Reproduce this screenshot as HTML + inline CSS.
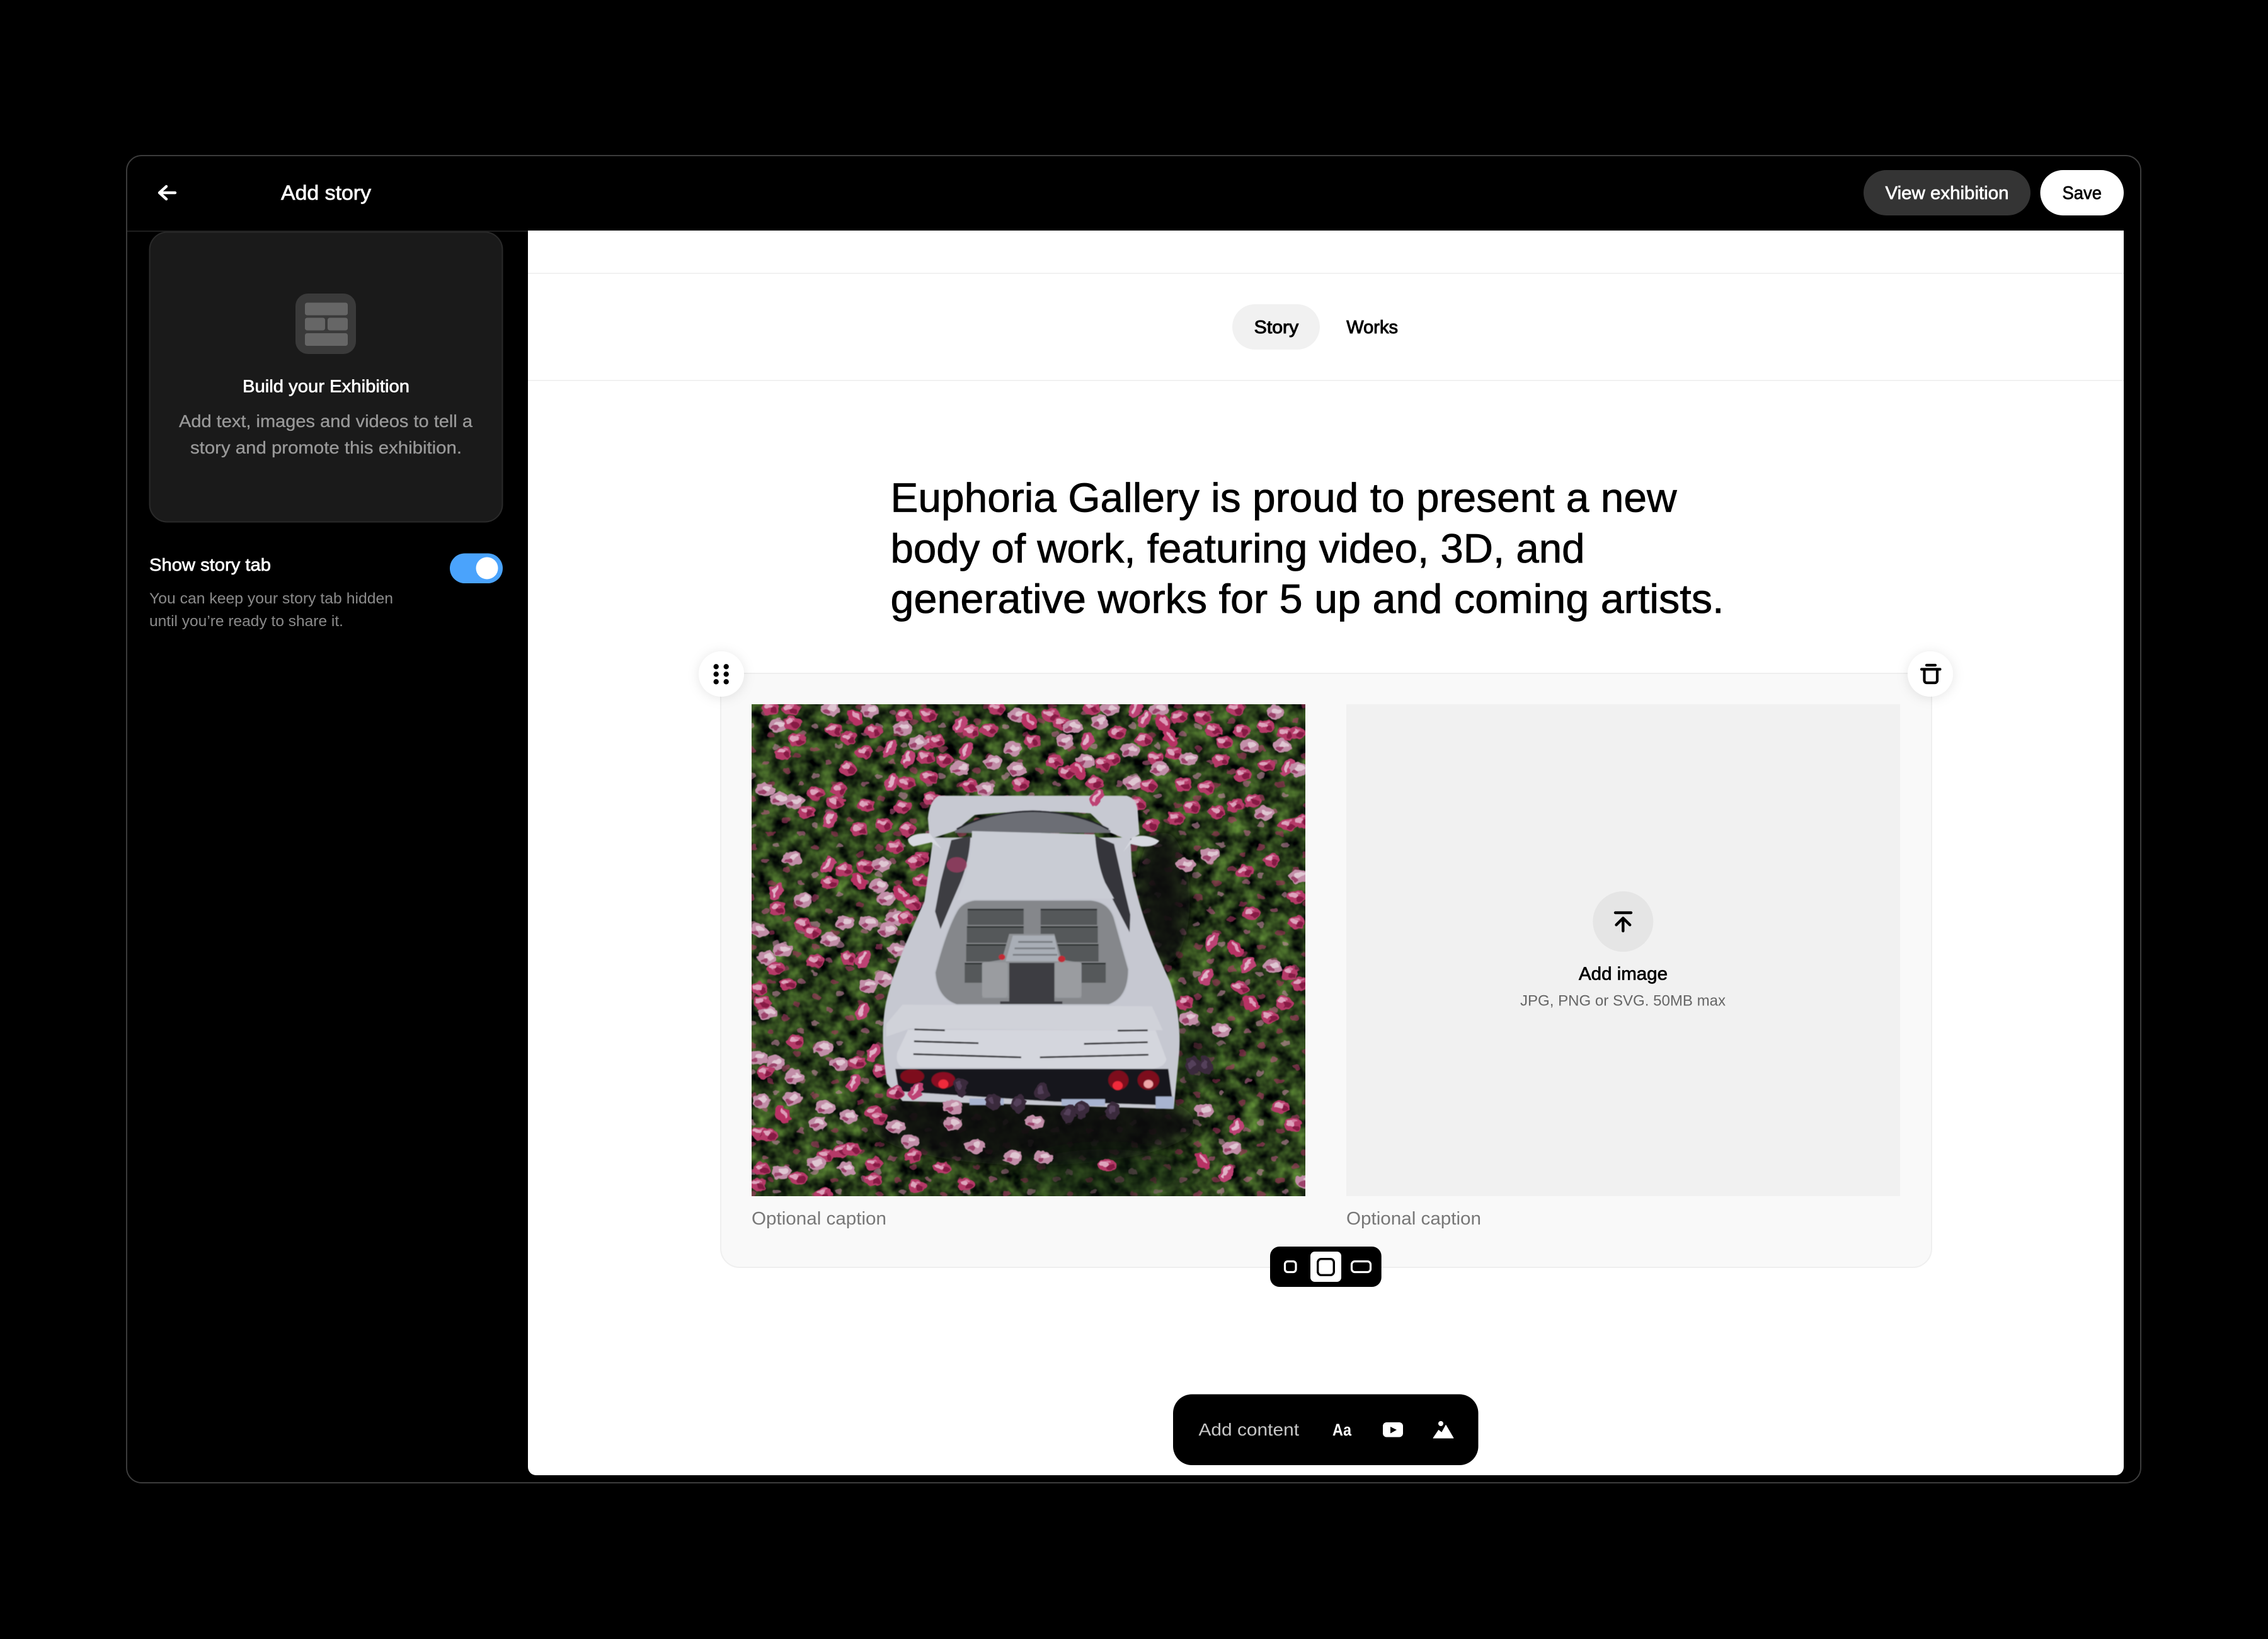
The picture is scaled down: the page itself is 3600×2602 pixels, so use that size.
<!DOCTYPE html>
<html lang="en"><head><meta charset="utf-8"><title>Add story</title>
<style>
html,body{margin:0;padding:0;background:#000;width:3600px;height:2602px;overflow:hidden}
svg{display:block}
text{font-family:"Liberation Sans",Arial,sans-serif}
.m{stroke-width:.7px;paint-order:stroke}
</style></head><body>
<svg xmlns="http://www.w3.org/2000/svg" width="3600" height="2602" viewBox="0 0 3600 2602">
<defs>
<clipPath id="ic"><rect x="1193" y="1118" width="879" height="781"/></clipPath>
<filter id="leaf" x="0" y="0" width="100%" height="100%" color-interpolation-filters="sRGB">
<feTurbulence type="fractalNoise" baseFrequency=".04" numOctaves="3" seed="7"/>
<feColorMatrix values=".6 0 0 0 -.14  .85 0 0 0 -.18  .32 0 0 0 -.06  0 0 0 0 1"/>
</filter>
<filter id="rough" filterUnits="userSpaceOnUse" x="0" y="0" width="1600" height="1600" color-interpolation-filters="sRGB">
<feTurbulence type="fractalNoise" baseFrequency=".05" numOctaves="2" seed="11" result="n"/>
<feDisplacementMap in="SourceGraphic" in2="n" scale="18" xChannelSelector="R" yChannelSelector="G"/>
<feGaussianBlur stdDeviation="1"/>
</filter>
<filter id="soft" filterUnits="userSpaceOnUse" x="0" y="0" width="1600" height="1600"><feGaussianBlur stdDeviation="1.4"/></filter>
<filter id="bl" x="-30%" y="-30%" width="160%" height="160%"><feGaussianBlur stdDeviation="26"/></filter>
<filter id="sh" x="-50%" y="-50%" width="200%" height="200%"><feDropShadow dx="0" dy="2" stdDeviation="9" flood-color="#000" flood-opacity=".1"/></filter>
<g id="a"><g transform="scale(1.1)"><ellipse rx="22" ry="19" fill="#b53a68"/><ellipse cx="-6" cy="-5" rx="10" ry="7" fill="#dda3bc"/><ellipse cx="8" cy="5" rx="9" ry="8" fill="#861a44"/><ellipse cx="3" cy="-11" rx="7" ry="3" fill="#d27a9e"/></g></g>
<g id="b"><g transform="scale(1.1)"><ellipse rx="24" ry="20" fill="#c28ea8"/><ellipse cx="5" cy="-4" rx="12" ry="8" fill="#dfc6d2"/><ellipse cx="-9" cy="7" rx="9" ry="6" fill="#9c426a"/></g></g>
<g id="c"><g transform="scale(1.15)"><ellipse rx="15" ry="25" transform="rotate(25)" fill="#bd4274"/><ellipse rx="5" ry="17" transform="rotate(25) translate(-3,-2)" fill="#e0b2c7"/></g></g>
<g id="e"><g transform="scale(1.15)"><ellipse rx="16" ry="25" transform="rotate(-32)" fill="#b83264"/><ellipse rx="5" ry="16" transform="rotate(-32) translate(4,-3)" fill="#dd9ab7"/></g></g>
<g id="d"><ellipse rx="20" ry="28" fill="#3a2a3c"/><ellipse cx="-3" cy="-5" rx="8" ry="13" fill="#54405a"/></g>
<pattern id="sm" width="176" height="154" patternUnits="userSpaceOnUse">
<ellipse cx="24" cy="20" rx="11" ry="9" fill="#a83a66"/><ellipse cx="90" cy="12" rx="10" ry="8" fill="#c084a0"/><ellipse cx="148" cy="42" rx="11" ry="9" fill="#9c2e5a"/><ellipse cx="60" cy="62" rx="10" ry="8" fill="#b45680"/><ellipse cx="118" cy="88" rx="11" ry="9" fill="#a83a66"/><ellipse cx="22" cy="104" rx="10" ry="9" fill="#c084a0"/><ellipse cx="76" cy="130" rx="11" ry="8" fill="#9c2e5a"/><ellipse cx="160" cy="128" rx="10" ry="8" fill="#b8648c"/>
</pattern>
</defs>

<!-- frame -->
<rect x="201" y="247" width="3197" height="2107" rx="24" fill="#000" stroke="#3c3c3c" stroke-width="2"/>
<rect x="202" y="366" width="636" height="2" fill="#1e1e1e"/>

<!-- header -->
<g fill="none" stroke="#fff" stroke-width="4.4" stroke-linecap="round" stroke-linejoin="round"><path d="M278 306H253M264 296l-11 10 11 10"/></g>
<text x="446" y="317" font-size="32" fill="#fff" stroke="#fff" class="m" textLength="143" lengthAdjust="spacingAndGlyphs">Add story</text>
<rect x="2958" y="270" width="265" height="72" rx="36" fill="#343434"/>
<text x="2992.500" y="316" font-size="29" fill="#fff" stroke="#fff" class="m" textLength="196" lengthAdjust="spacingAndGlyphs">View exhibition</text>
<rect x="3238.500" y="270" width="132.500" height="72" rx="36" fill="#fff"/>
<text x="3273.500" y="316" font-size="29" fill="#000" stroke="#000" class="m" textLength="62.500" lengthAdjust="spacingAndGlyphs">Save</text>

<!-- sidebar -->
<rect x="237.500" y="368.500" width="560" height="460" rx="28" fill="#1a1a1a" stroke="#2a2a2a" stroke-width="2"/>
<rect x="469" y="466" width="96" height="96" rx="20" fill="#3a3a3a"/>
<g fill="#666"><rect x="484" y="480.500" width="68" height="20" rx="3.500"/><rect x="484" y="504.500" width="32" height="20" rx="3.500"/><rect x="520" y="504.500" width="32" height="20" rx="3.500"/><rect x="484" y="529" width="68" height="20" rx="3.500"/></g>
<text x="385" y="622.500" font-size="28" fill="#fff" stroke="#fff" class="m" textLength="265" lengthAdjust="spacingAndGlyphs">Build your Exhibition</text>
<text x="284" y="678" font-size="28" fill="#999" stroke="#999" stroke-width=".3" textLength="466" lengthAdjust="spacingAndGlyphs">Add text, images and videos to tell a</text>
<text x="302" y="720" font-size="28" fill="#999" stroke="#999" stroke-width=".3" textLength="431" lengthAdjust="spacingAndGlyphs">story and promote this exhibition.</text>
<text x="237" y="906" font-size="28" fill="#fff" stroke="#fff" class="m" textLength="193" lengthAdjust="spacingAndGlyphs">Show story tab</text>
<text x="237" y="958" font-size="24.500" fill="#8a8a8a" textLength="387" lengthAdjust="spacingAndGlyphs">You can keep your story tab hidden</text>
<text x="237" y="994" font-size="24.500" fill="#8a8a8a" textLength="308" lengthAdjust="spacingAndGlyphs">until you’re ready to share it.</text>
<rect x="714" y="878.500" width="84" height="47.500" rx="23.700" fill="#4aa3fc"/>
<circle cx="773" cy="902" r="17.500" fill="#fff"/>

<!-- main panel -->
<path d="M838 366H3371V2329a13 13 0 0 1-13 13H851a13 13 0 0 1-13-13Z" fill="#fff"/>
<rect x="838" y="433" width="2533" height="2" fill="#f1f1f1"/>
<rect x="838" y="603" width="2533" height="2" fill="#f1f1f1"/>
<rect x="1956" y="483" width="139" height="72" rx="36" fill="#f1f1f1"/>
<text x="1990.700" y="529" font-size="28.500" fill="#000" stroke="#000" stroke-width="1" textLength="70.500" lengthAdjust="spacingAndGlyphs">Story</text>
<text x="2137.300" y="529" font-size="28.500" fill="#000" stroke="#000" stroke-width="1" textLength="81.700" lengthAdjust="spacingAndGlyphs">Works</text>

<g font-size="65" fill="#000" stroke="#000" stroke-width=".8">
<text x="1413.500" y="812.500" textLength="1248" lengthAdjust="spacingAndGlyphs">Euphoria Gallery is proud to present a new</text>
<text x="1413.500" y="893" textLength="1102" lengthAdjust="spacingAndGlyphs">body of work, featuring video, 3D, and</text>
<text x="1413.500" y="973" textLength="1323" lengthAdjust="spacingAndGlyphs">generative works for 5 up and coming artists.</text>
</g>

<!-- block card -->
<rect x="1144" y="1069" width="1922" height="943" rx="30" fill="#f9f9f9" stroke="#efefef" stroke-width="2"/>

<!-- image -->
<g clip-path="url(#ic)">
<rect x="1193" y="1118" width="879" height="781" fill="#1f2a19"/>
<rect x="1193" y="1118" width="879" height="781" filter="url(#leaf)"/>
<g transform="translate(1180,1100) scale(.574,.5102)">
<g filter="url(#rough)">
<rect x="20" y="30" width="1540" height="1540" fill="url(#sm)" opacity=".6"/>
</g>
<ellipse cx="1160" cy="640" rx="75" ry="210" fill="#0b0f08" opacity=".9" filter="url(#bl)"/>
<ellipse cx="800" cy="1340" rx="450" ry="130" fill="#0a0e08" opacity=".9" filter="url(#bl)"/>
<ellipse cx="1000" cy="1500" rx="240" ry="80" fill="#0f1a0c" opacity=".5" filter="url(#bl)"/>
<ellipse cx="1250" cy="1130" rx="60" ry="110" fill="#0f140c" opacity=".5" filter="url(#bl)"/>
<!-- flowers -->
<g filter="url(#rough)">
<use href="#a" x="75" y="48"/><use href="#a" x="130" y="50"/><use href="#b" x="240" y="50"/><use href="#b" x="350" y="55"/><use href="#a" x="445" y="70"/><use href="#a" x="510" y="70"/><use href="#c" x="600" y="100"/><use href="#a" x="700" y="48"/><use href="#b" x="760" y="70"/><use href="#a" x="850" y="70"/><use href="#a" x="965" y="48"/><use href="#b" x="1015" y="50"/><use href="#c" x="1085" y="50"/><use href="#b" x="1150" y="50"/><use href="#a" x="1205" y="75"/><use href="#a" x="1270" y="75"/><use href="#a" x="1360" y="50"/><use href="#b" x="1470" y="60"/><use href="#a" x="1530" y="125"/>
<use href="#b" x="95" y="100"/><use href="#a" x="135" y="95"/><use href="#a" x="250" y="115"/><use href="#a" x="360" y="120"/><use href="#e" x="310" y="75"/><use href="#b" x="440" y="110"/><use href="#a" x="515" y="155"/><use href="#a" x="630" y="120"/><use href="#a" x="680" y="115"/><use href="#e" x="790" y="90"/><use href="#a" x="880" y="95"/><use href="#b" x="910" y="105"/><use href="#b" x="985" y="90"/><use href="#a" x="1035" y="125"/><use href="#c" x="1110" y="80"/><use href="#e" x="1160" y="95"/><use href="#a" x="1108" y="145"/><use href="#e" x="1180" y="140"/><use href="#a" x="1300" y="115"/><use href="#a" x="1378" y="118"/><use href="#a" x="1445" y="105"/><use href="#a" x="1500" y="125"/>
<use href="#a" x="147" y="147"/><use href="#a" x="290" y="140"/><use href="#b" x="480" y="155"/><use href="#a" x="535" y="150"/><use href="#c" x="615" y="180"/><use href="#b" x="745" y="175"/><use href="#a" x="800" y="150"/><use href="#b" x="890" y="150"/><use href="#c" x="950" y="150"/><use href="#b" x="1070" y="178"/><use href="#a" x="1190" y="188"/><use href="#a" x="1330" y="155"/><use href="#b" x="1400" y="165"/><use href="#b" x="1490" y="165"/>
<use href="#a" x="112" y="187"/><use href="#a" x="335" y="185"/><use href="#c" x="405" y="172"/><use href="#c" x="455" y="205"/><use href="#a" x="505" y="200"/><use href="#a" x="555" y="207"/><use href="#b" x="690" y="215"/><use href="#a" x="860" y="215"/><use href="#b" x="945" y="210"/><use href="#a" x="1020" y="205"/><use href="#a" x="1140" y="205"/><use href="#b" x="1230" y="205"/><use href="#a" x="1320" y="208"/>
<use href="#a" x="290" y="235"/><use href="#b" x="600" y="235"/><use href="#b" x="755" y="237"/><use href="#e" x="925" y="240"/><use href="#a" x="995" y="222"/><use href="#b" x="1150" y="235"/><use href="#a" x="1380" y="255"/><use href="#a" x="1445" y="225"/><use href="#c" x="1505" y="232"/><use href="#b" x="1535" y="238"/>
<use href="#a" x="265" y="300"/><use href="#c" x="410" y="280"/><use href="#a" x="450" y="280"/><use href="#a" x="515" y="262"/><use href="#a" x="625" y="290"/><use href="#b" x="670" y="300"/><use href="#a" x="765" y="285"/><use href="#a" x="895" y="248"/><use href="#a" x="970" y="280"/><use href="#b" x="1075" y="280"/><use href="#a" x="1120" y="288"/><use href="#a" x="1215" y="285"/><use href="#a" x="1280" y="295"/>
<use href="#b" x="60" y="300"/><use href="#b" x="100" y="330"/><use href="#b" x="140" y="340"/><use href="#a" x="200" y="312"/><use href="#a" x="255" y="340"/><use href="#a" x="340" y="350"/><use href="#a" x="440" y="355"/><use href="#a" x="520" y="330"/><use href="#a" x="1090" y="345"/><use href="#a" x="1125" y="410"/><use href="#a" x="1195" y="390"/><use href="#a" x="1240" y="355"/><use href="#a" x="1310" y="370"/><use href="#a" x="1360" y="350"/><use href="#a" x="1408" y="335"/><use href="#b" x="1440" y="375"/><use href="#a" x="1505" y="410"/><use href="#a" x="1545" y="400"/>
<use href="#a" x="175" y="370"/><use href="#c" x="240" y="395"/><use href="#a" x="320" y="425"/><use href="#a" x="390" y="410"/><use href="#a" x="455" y="425"/><use href="#a" x="420" y="480"/><use href="#a" x="490" y="515"/><use href="#b" x="135" y="515"/><use href="#c" x="235" y="535"/><use href="#a" x="280" y="550"/><use href="#a" x="335" y="540"/><use href="#b" x="380" y="535"/><use href="#a" x="475" y="525"/>
<use href="#a" x="238" y="590"/><use href="#e" x="318" y="585"/><use href="#b" x="375" y="600"/><use href="#a" x="490" y="583"/><use href="#c" x="90" y="620"/><use href="#e" x="435" y="625"/><use href="#b" x="395" y="640"/><use href="#a" x="470" y="655"/><use href="#b" x="165" y="645"/><use href="#a" x="95" y="672"/><use href="#b" x="345" y="715"/><use href="#b" x="420" y="700"/><use href="#a" x="450" y="700"/>
<use href="#b" x="42" y="738"/><use href="#a" x="165" y="720"/><use href="#a" x="190" y="745"/><use href="#b" x="240" y="768"/><use href="#b" x="280" y="715"/><use href="#b" x="398" y="737"/><use href="#b" x="110" y="800"/><use href="#c" x="330" y="830"/><use href="#b" x="425" y="800"/><use href="#a" x="200" y="835"/><use href="#a" x="290" y="825"/><use href="#b" x="65" y="825"/><use href="#a" x="90" y="858"/>
<use href="#a" x="122" y="905"/><use href="#b" x="345" y="910"/><use href="#b" x="390" y="890"/><use href="#a" x="45" y="920"/><use href="#b" x="68" y="995"/><use href="#c" x="330" y="990"/><use href="#a" x="50" y="965"/>
<use href="#a" x="145" y="1085"/><use href="#b" x="220" y="1105"/><use href="#c" x="360" y="1120"/><use href="#b" x="40" y="1135"/><use href="#b" x="90" y="1150"/><use href="#b" x="265" y="1155"/><use href="#a" x="315" y="1150"/><use href="#a" x="380" y="1175"/><use href="#a" x="60" y="1180"/><use href="#b" x="140" y="1195"/><use href="#c" x="305" y="1215"/><use href="#b" x="50" y="1270"/><use href="#b" x="135" y="1262"/><use href="#b" x="225" y="1290"/><use href="#b" x="290" y="1318"/><use href="#e" x="110" y="1312"/><use href="#a" x="360" y="1305"/><use href="#a" x="375" y="1322"/><use href="#b" x="207" y="1340"/><use href="#a" x="45" y="1370"/><use href="#b" x="420" y="1350"/><use href="#a" x="70" y="1375"/><use href="#a" x="270" y="1425"/><use href="#a" x="228" y="1440"/><use href="#b" x="460" y="1395"/><use href="#a" x="470" y="1440"/><use href="#a" x="300" y="1420"/><use href="#a" x="50" y="1480"/><use href="#a" x="150" y="1510"/><use href="#b" x="105" y="1490"/><use href="#b" x="200" y="1465"/><use href="#b" x="285" y="1480"/><use href="#a" x="360" y="1465"/><use href="#a" x="360" y="1515"/><use href="#a" x="550" y="1478"/><use href="#a" x="615" y="1530"/><use href="#a" x="480" y="1535"/><use href="#a" x="220" y="1560"/><use href="#a" x="40" y="1530"/>
<use href="#b" x="580" y="1340"/><use href="#a" x="580" y="1285"/><use href="#b" x="805" y="1335"/><use href="#b" x="640" y="1410"/><use href="#b" x="745" y="1445"/><use href="#a" x="1005" y="1470"/><use href="#b" x="830" y="1445"/><use href="#b" x="1275" y="1300"/><use href="#c" x="1365" y="1350"/><use href="#e" x="1270" y="1455"/><use href="#c" x="1335" y="1495"/><use href="#a" x="1520" y="1345"/><use href="#a" x="1487" y="1288"/><use href="#b" x="1350" y="1415"/><use href="#b" x="1555" y="1520"/>
<use href="#a" x="1460" y="520"/><use href="#a" x="1385" y="555"/><use href="#b" x="1222" y="535"/><use href="#b" x="1290" y="505"/><use href="#a" x="1530" y="635"/><use href="#b" x="1535" y="570"/><use href="#a" x="1405" y="685"/><use href="#a" x="1530" y="715"/><use href="#c" x="1295" y="775"/><use href="#e" x="1360" y="795"/><use href="#c" x="1395" y="848"/><use href="#b" x="1465" y="852"/><use href="#a" x="1510" y="872"/><use href="#c" x="1280" y="885"/><use href="#a" x="1375" y="918"/><use href="#a" x="1540" y="905"/><use href="#e" x="1405" y="968"/><use href="#a" x="1222" y="965"/><use href="#b" x="1232" y="1012"/><use href="#a" x="1455" y="1008"/><use href="#b" x="1320" y="1050"/><use href="#a" x="1495" y="965"/><use href="#d" x="1243" y="1160"/><use href="#d" x="1278" y="1160"/>
</g>

<!-- car -->
<g filter="url(#soft)">
<path d="M525 450L500 650C460 750 415 860 395 960C382 1030 383 1110 397 1215L440 1270L1190 1295L1205 1120C1210 1050 1200 960 1180 900C1140 800 1100 700 1075 560L1070 450Z" fill="#c6c8d1"/>
<path d="M440 970L1130 975L1160 1050L460 1045L395 1070L395 1030Z" fill="#d0d2d9"/>
<path d="M540 320L1060 320Q1085 328 1090 360L1095 440L1065 458L1015 435L960 375Q800 360 640 380L585 430L515 455L510 390Q515 335 540 320Z" fill="#c7c9d2"/>
<path d="M585 428Q680 370 800 368Q920 370 1015 428L1015 436L585 436Z" fill="#6c6e74"/>
<path d="M590 424Q680 370 800 368Q920 370 1010 424" fill="none" stroke="#22242a" stroke-width="5"/>
<path d="M455 455Q470 435 515 437L548 485L520 465L470 478Q455 470 455 455Z" fill="#d7d9e0"/>
<path d="M1050 495L1075 450Q1110 435 1150 460Q1140 480 1100 478L1070 470Z" fill="#d7d9e0"/>
<path d="M628 445L575 458L545 590L530 680L545 735L575 655L600 590Q625 520 628 445Z" fill="#3c3e42"/>
<ellipse cx="590" cy="535" rx="28" ry="24" fill="#a83f66" opacity=".7"/>
<path d="M973 445L1025 470L1055 620L1070 690L1068 745L1020 640L995 590Q975 520 973 445Z" fill="#34363b"/>
<path d="M632 430L972 440Q978 530 1000 590L1025 640L590 645L610 590Q630 510 632 430Z" fill="#c9ccd4"/>
<path d="M640 645L960 645Q1010 650 1025 700L1065 860Q1065 950 1010 970L590 970Q535 950 530 870Q560 740 590 680Q605 650 640 645Z" fill="#85878b" stroke="#bcbfc7" stroke-width="3"/>
<g fill="#55585a"><rect x="620" y="674" width="155" height="48"/><rect x="618" y="728" width="157" height="50"/><rect x="616" y="784" width="159" height="52"/><rect x="612" y="842" width="163" height="60"/><rect x="822" y="674" width="156" height="48"/><rect x="822" y="728" width="158" height="50"/><rect x="822" y="784" width="160" height="52"/><rect x="822" y="842" width="180" height="60"/></g>
<g stroke="#1e2022" stroke-width="4"><path d="M620 674H775M618 728H775M616 784H775M612 842H775M822 674H978M822 728H980M822 784H982M822 842H1002"/></g>
<path d="M735 750L860 750L880 830L935 840L935 950L660 950L660 840L715 830Z" fill="#8f9296"/>
<path d="M745 755L860 755L875 835L725 835Z" fill="#a9aeb6"/>
<g stroke="#777a80" stroke-width="5" fill="none"><path d="M760 775H855M750 795H862M745 815H868"/></g>
<rect x="735" y="840" width="125" height="120" fill="#3c3d42"/>
<rect x="660" y="838" width="70" height="110" rx="8" fill="#9a9ca0"/>
<rect x="862" y="838" width="73" height="110" rx="8" fill="#9a9ca0"/>
<circle cx="715" cy="822" r="9" fill="#c22a34"/><circle cx="880" cy="828" r="10" fill="#c22a34"/>
<rect x="710" y="960" width="172" height="8" fill="#3a3b40"/>
<path d="M455 1048L1140 1050L1170 1140Q1165 1165 1130 1170L440 1165Q420 1155 425 1120Z" fill="#d4d6dd"/>
<g stroke="#1b1c20" stroke-width="5" fill="none"><path d="M473 1047L557 1050M472 1084L650 1090M470 1124L768 1134M820 1134L1120 1126M942 1092L1118 1087M1035 1051L1118 1050"/></g>
<path d="M420 1170L1175 1170L1190 1295L1140 1282L860 1272L430 1240Z" fill="#15151a"/>
<ellipse cx="467" cy="1193" rx="33" ry="22" fill="#7d0f1c"/><ellipse cx="553" cy="1205" rx="33" ry="25" fill="#8a1020"/><ellipse cx="1037" cy="1205" rx="28" ry="30" fill="#7d0f1c"/><ellipse cx="1120" cy="1205" rx="30" ry="30" fill="#7d0f1c"/>
<circle cx="553" cy="1217" r="14" fill="#f02a3a"/><circle cx="1035" cy="1222" r="14" fill="#f02a3a"/><circle cx="1120" cy="1217" r="13" fill="#efa6a8"/>
<g fill="#a8b4d0"><rect x="625" y="1262" width="95" height="21"/><rect x="880" y="1264" width="120" height="21"/><rect x="1140" y="1256" width="50" height="38"/></g>
</g>
<g filter="url(#rough)">
<use href="#c" x="478" y="1238"/><use href="#d" x="600" y="1228"/><use href="#d" x="825" y="1240"/><use href="#d" x="690" y="1272"/><use href="#d" x="900" y="1310"/><use href="#d" x="1020" y="1300"/><use href="#d" x="935" y="1295"/><use href="#d" x="760" y="1280"/><use href="#b" x="580" y="1288"/><use href="#a" x="420" y="1245"/><use href="#c" x="978" y="326"/>
</g>
</g>
</g>

<!-- add image tile -->
<rect x="2137" y="1118" width="879" height="781" fill="#f1f1f1"/>
<circle cx="2576.300" cy="1463" r="48" fill="#e5e5e5"/>
<g fill="none" stroke="#000" stroke-width="4.400" stroke-linecap="round" stroke-linejoin="round"><path d="M2564 1449H2589M2576.300 1478V1458M2565.500 1468.300L2576.300 1457.500L2587.200 1468.300"/></g>
<text x="2506" y="1555.700" font-size="28.500" fill="#000" stroke="#000" class="m" textLength="141" lengthAdjust="spacingAndGlyphs">Add image</text>
<text x="2413" y="1596.700" font-size="24.500" fill="#666" textLength="326" lengthAdjust="spacingAndGlyphs">JPG, PNG or SVG. 50MB max</text>
<text x="1193" y="1944" font-size="29" fill="#777" textLength="214" lengthAdjust="spacingAndGlyphs">Optional caption</text>
<text x="2137" y="1944" font-size="29" fill="#777" textLength="214" lengthAdjust="spacingAndGlyphs">Optional caption</text>

<!-- handle -->
<circle cx="1145" cy="1070" r="36" fill="#fff" filter="url(#sh)"/>
<g fill="#000"><circle cx="1136.700" cy="1058.300" r="4.200"/><circle cx="1152.700" cy="1058.300" r="4.200"/><circle cx="1136.700" cy="1070.300" r="4.200"/><circle cx="1152.700" cy="1070.300" r="4.200"/><circle cx="1136.700" cy="1082.300" r="4.200"/><circle cx="1152.700" cy="1082.300" r="4.200"/></g>
<!-- trash -->
<circle cx="3064" cy="1070" r="36" fill="#fff" filter="url(#sh)"/>
<g fill="none" stroke="#000" stroke-width="4.200" stroke-linecap="round" stroke-linejoin="round"><path d="M3058 1056H3072M3050 1062.500H3079.500M3054.500 1063V1080a4 4 0 0 0 4 4H3071a4 4 0 0 0 4-4V1063"/></g>

<!-- layout pill -->
<rect x="2016" y="1979" width="176.700" height="64" rx="15" fill="#000"/>
<rect x="2080" y="1987" width="49" height="48" rx="7" fill="#fff"/>
<rect x="2039.500" y="2002.500" width="17.500" height="17" rx="4.500" fill="none" stroke="#fff" stroke-width="3.200"/>
<rect x="2091.700" y="1998.700" width="25.600" height="25.600" rx="5.500" fill="none" stroke="#000" stroke-width="3.400"/>
<rect x="2145.500" y="2002.500" width="30" height="17" rx="5" fill="none" stroke="#fff" stroke-width="3.200"/>

<!-- add content -->
<rect x="1862" y="2213.500" width="484.500" height="112.500" rx="30" fill="#000"/>
<text x="1902.500" y="2279" font-size="28" fill="#c6c6c6" textLength="159.500" lengthAdjust="spacingAndGlyphs">Add content</text>
<text x="2115" y="2279" font-size="27" font-weight="700" fill="#fff" textLength="30" lengthAdjust="spacingAndGlyphs">Aa</text>
<rect x="2195" y="2258" width="32" height="23.500" rx="6" fill="#fff"/>
<path d="M2207 2265L2207 2275.500L2217 2270Z" fill="#000"/>
<circle cx="2287" cy="2260" r="4" fill="#fff"/>
<path d="M2275 2283L2283.500 2270.500L2288.500 2274.500L2295 2262.500L2307 2283Z" fill="#fff" stroke="#fff" stroke-width="1" stroke-linejoin="round"/>
</svg>
</body></html>
